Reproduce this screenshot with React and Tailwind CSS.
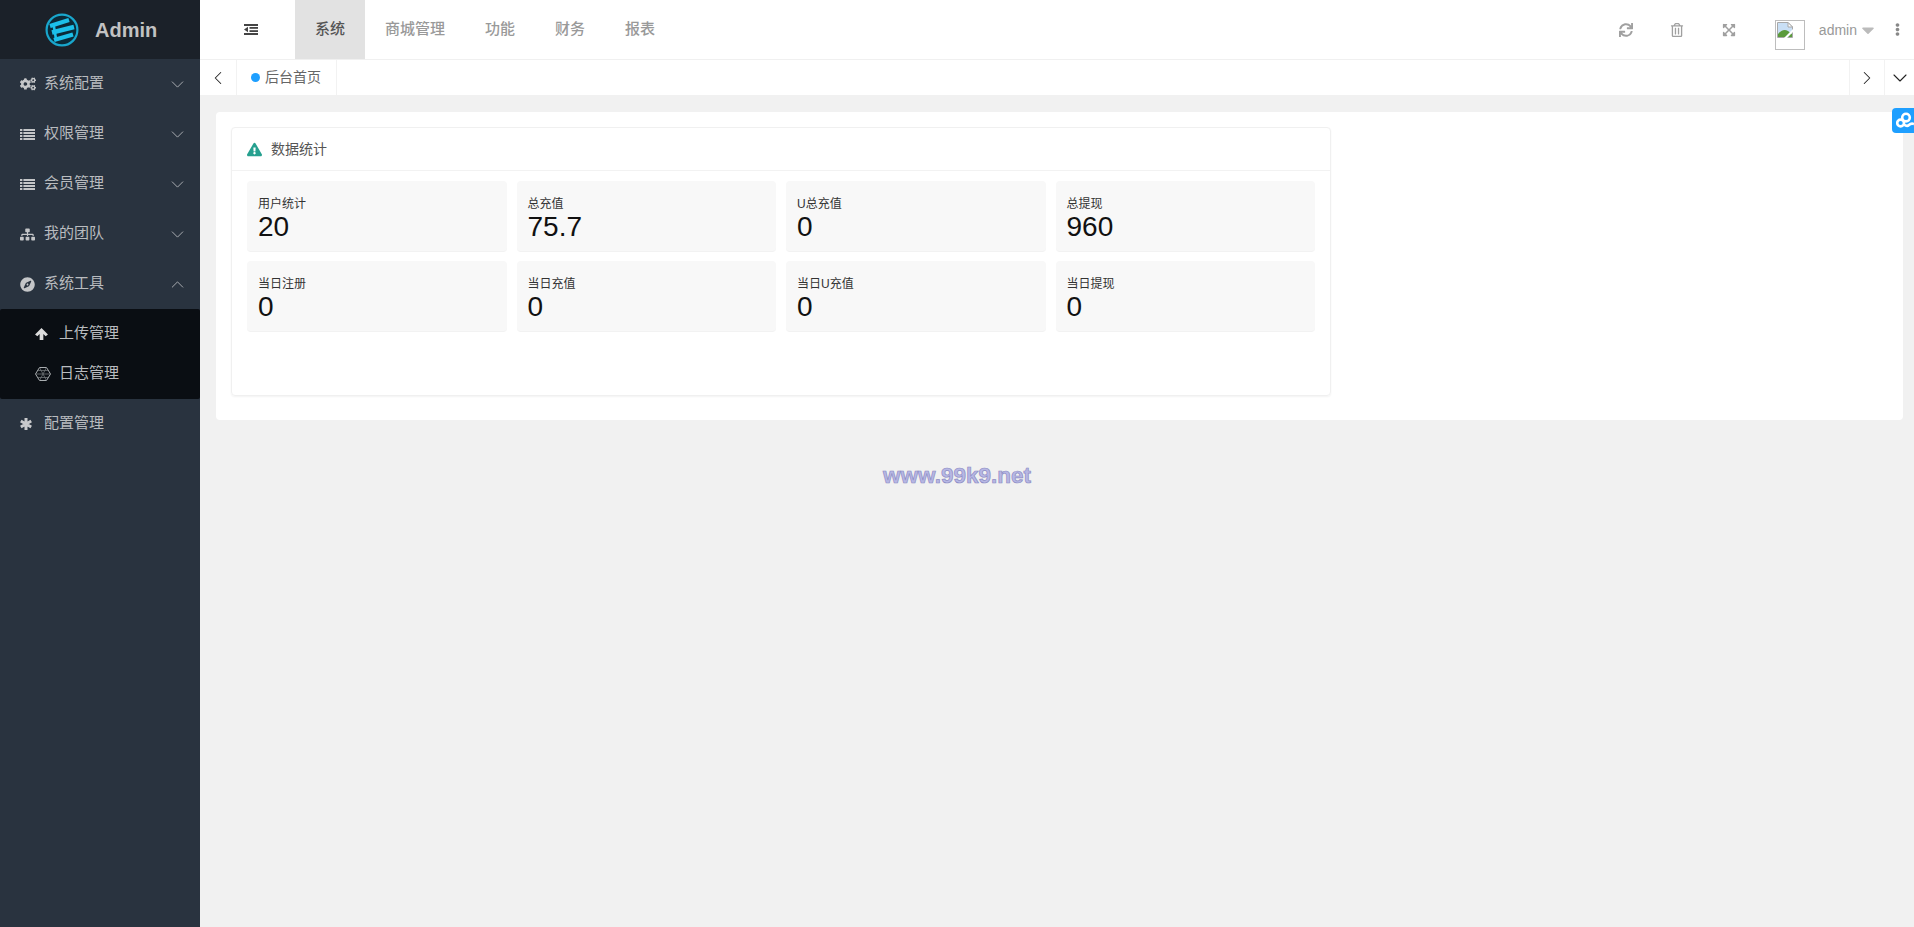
import React from "react";
import { ChevronDown, ChevronLeft, ChevronRight, ChevronUp } from "lucide-react";
import {
  FaCaretDown,
  FaCogs,
  FaCompass,
  FaEllipsisV,
  FaExclamationTriangle,
  FaExpandArrowsAlt,
  FaRegTrashAlt,
  FaSitemap,
  FaSync,
} from "react-icons/fa";

const Logo = () => (
  <svg width="34" height="34" viewBox="0 0 34 34">
    <circle cx="17" cy="17" r="15.4" fill="#0b2a38" stroke="#19a6cc" strokeWidth="2.2" />
    <g stroke="#1cc0ea" strokeWidth="4.4">
      <path d="M5 13 L24 7" />
      <path d="M7 19.5 L29 14" />
      <path d="M9 27 L28 21.5" />
      <path d="M8.5 11 L11 26" strokeWidth="2.6" />
    </g>
  </svg>
);

const HexIcon = () => (
  <svg width="16" height="16" viewBox="0 0 16 16" fill="none" stroke="#a9adb0" strokeWidth="0.8">
    <path d="M4.5 1.5 H11.5 L15.5 8 L11.5 14.5 H4.5 L0.5 8 Z" strokeWidth="1" />
    <path d="M4.5 1.5 L11.5 14.5 M11.5 1.5 L4.5 14.5 M0.5 8 H15.5 M3 4.5 H13 M3 11.5 H13" stroke="#6f7376" />
  </svg>
);

const BrokenImage = () => (
  <svg width="16" height="16" viewBox="0 0 16 16">
    <path d="M0.5 0.5 H11 L15.5 5 V15.5 H0.5 Z" fill="#c9dff5" stroke="#a8a8a8" strokeWidth="1" />
    <path d="M11 0.5 V5 H15.5 Z" fill="#fff" stroke="#a8a8a8" strokeWidth="1" />
    <path d="M1 15 V12 Q6 6 11 9 L15 12 V15 Z" fill="#5b9b3c" />
    <path d="M7 16 L16 7 V10 L10 16 Z" fill="#fff" />
  </svg>
);

const LinkIcon = () => (
  <svg width="18" height="18" viewBox="0 0 18 18" fill="none" stroke="#fff" strokeWidth="2.6">
    <circle cx="4.6" cy="11" r="3.4" />
    <circle cx="10" cy="5.6" r="3.8" />
    <path d="M8 12.5 Q11 15 13 13 Q15 11 18 12" />
  </svg>
);

const OutdentIcon = () => (
  <svg width="14" height="11" viewBox="0 0 14 11" fill="#444">
    <rect width="14" height="2" />
    <rect x="5.5" y="3" width="8.5" height="1.8" />
    <rect x="5.5" y="6.2" width="8.5" height="1.8" />
    <rect y="9" width="14" height="2" />
    <path d="M4 2.8 L0 5.5 L4 8.2 Z" />
  </svg>
);

const ListIcon = () => (
  <svg width="15" height="11" viewBox="0 0 15 11" fill="#c4c6c8">
    {[0, 3, 6, 9].map((y) => (
      <g key={y}>
        <rect y={y} width="2.4" height="2" />
        <rect x="3.4" y={y} width="11.6" height="2" />
      </g>
    ))}
  </svg>
);

const ArrowUpIcon = () => (
  <svg width="13" height="12" viewBox="0 0 14 13" fill="#dcdcdc">
    <path d="M7 0 L14 7 L11.5 9 L9 6.5 V13 H5 V6.5 L2.5 9 L0 7 Z" />
  </svg>
);

const AsteriskIcon = () => (
  <svg width="12" height="12" viewBox="0 0 12 12" stroke="#c9cacc" strokeWidth="3">
    <path d="M6 0 V12 M0.8 3 L11.2 9 M11.2 3 L0.8 9" />
  </svg>
);

const menus = [
  { name: "系统配置", icon: <FaCogs size={16} /> },
  { name: "权限管理", icon: <ListIcon /> },
  { name: "会员管理", icon: <ListIcon /> },
  { name: "我的团队", icon: <FaSitemap size={15} /> },
];

const stats = [
  ["用户统计", "20"],
  ["总充值", "75.7"],
  ["U总充值", "0"],
  ["总提现", "960"],
  ["当日注册", "0"],
  ["当日充值", "0"],
  ["当日U充值", "0"],
  ["当日提现", "0"],
];

const MenuRow = ({ icon, name, open, arrow = true }) => (
  <div className="flex h-[50px] items-center pl-5 pr-3 text-[15px] text-[#b9bcbf]">
    <span className="flex w-6 items-center text-[#c4c6c8]">{icon}</span>
    <span className="flex-1 pb-px">{name}</span>
    {arrow &&
      (open ? (
        <ChevronUp size={21} strokeWidth={1} />
      ) : (
        <ChevronDown size={21} strokeWidth={1} />
      ))}
  </div>
);

const Sidebar = () => (
  <aside className="flex w-[200px] shrink-0 flex-col bg-[#29333f]">
    <div className="flex h-[59px] items-center bg-[#1b2129] pl-[45px]">
      <Logo />
      <span className="ml-[16px] text-[20px] font-bold text-[#c2c2c2]">Admin</span>
    </div>
    {menus.map((m) => (
      <MenuRow key={m.name} icon={m.icon} name={m.name} />
    ))}
    <MenuRow icon={<FaCompass size={15} />} name="系统工具" open />
    <div className="rounded-[2px] bg-[#0a0e13] py-[5px] text-[15px] text-[#b9bcbf]">
      <div className="flex h-10 items-center pl-[35px]">
        <span className="flex w-6 items-center">
          <ArrowUpIcon />
        </span>
        <span className="pb-px">上传管理</span>
      </div>
      <div className="flex h-10 items-center pl-[35px]">
        <span className="flex w-6 items-center">
          <HexIcon />
        </span>
        <span className="pb-px">日志管理</span>
      </div>
    </div>
    <MenuRow icon={<AsteriskIcon />} name="配置管理" arrow={false} />
  </aside>
);

const TopBar = () => (
  <header className="flex h-[60px] shrink-0 items-start justify-between border-b border-[#f0f0f0] bg-white">
    <div className="flex h-[59px] items-center">
      <div className="flex w-[95px] items-center justify-center pl-[7px]">
        <OutdentIcon />
      </div>
      <div className="flex h-full items-center bg-[#e2e2e2] px-5 text-[15px] font-medium text-[#555]">系统</div>
      {["商城管理", "功能", "财务", "报表"].map((t) => (
        <div key={t} className="flex h-full items-center px-5 text-[15px] font-medium text-[#999]">
          {t}
        </div>
      ))}
    </div>
    <div className="flex h-[59px] items-center pr-[10px] text-[#a0a0a0]">
      <FaSync size={14} />
      <FaRegTrashAlt size={14} className="ml-[37px]" />
      <FaExpandArrowsAlt size={14} className="ml-[38px]" />
      <div className="ml-[39px] mt-[10px] h-[30px] w-[30px] border border-[#bdbdbd] p-px">
        <BrokenImage />
      </div>
      <span className="ml-[14px] text-sm text-[#999]">admin</span>
      <FaCaretDown size={20} className="ml-px text-[#bbb]" />
      <FaEllipsisV size={13} className="ml-[13px] text-[#888]" />
    </div>
  </header>
);

const TabBar = () => (
  <div className="flex h-[35px] shrink-0 items-stretch bg-white text-[#222]">
    <div className="flex w-[37px] items-center justify-center border-r border-[#f2f2f2]">
      <ChevronLeft size={22} strokeWidth={1.1} />
    </div>
    <div className="flex w-[100px] items-center border-r border-[#f2f2f2] pl-[14px] text-sm text-[#666]">
      <span className="mr-[5px] h-[9px] w-[9px] rounded-full bg-[#1e9fff]" />
      <span className="pb-[2px]">后台首页</span>
    </div>
    <div className="flex-1" />
    <div className="flex w-[35px] items-center justify-center border-l border-[#f2f2f2]">
      <ChevronRight size={22} strokeWidth={1.1} />
    </div>
    <div className="flex w-[30px] items-center justify-center border-l border-[#f2f2f2]">
      <ChevronDown size={24} strokeWidth={1.1} />
    </div>
  </div>
);

const StatBox = ({ label, value }) => (
  <div className="h-[71px] rounded-sm border-b border-[#f2f2f2] bg-[#f8f8f8] pl-[11px] pt-[15px]">
    <div className="h-4 text-xs leading-4 text-[#333]">{label}</div>
    <div className="text-[28px] leading-[30px] text-[#111]">{value}</div>
  </div>
);

export default function App() {
  return (
    <div className="relative flex h-screen w-full overflow-hidden bg-[#f1f1f1] [font-family:'Liberation_Sans','Noto_Sans_CJK_SC',sans-serif]">
      <Sidebar />
      <main className="flex min-w-0 flex-1 flex-col">
        <TopBar />
        <TabBar />
        <div className="ml-4 mr-[11px] mt-[17px] h-[308px] rounded bg-white pl-[15px] pt-[15px]">
          <div className="h-[269px] w-[1100px] rounded border border-[#f0f0f0] shadow-[0_1px_2px_rgba(0,0,0,0.05)]">
            <div className="flex h-[43px] items-center border-b border-[#f2f2f2] pl-[15px] text-sm text-[#555]">
              <FaExclamationTriangle size={15} className="mr-[9px] text-[#26a08f]" />
              <span className="pb-px">数据统计</span>
            </div>
            <div className="grid grid-cols-4 gap-x-[10px] gap-y-[9px] px-[15px] pt-[10px]">
              {stats.map(([label, value]) => (
                <StatBox key={label} label={label} value={value} />
              ))}
            </div>
          </div>
        </div>
        <div className="mt-[44px] pr-[200px] text-center text-[22.5px] font-bold leading-6 text-[#b7b7e4] [-webkit-text-stroke:0.7px_#8d8dc4]">
          www.99k9.net
        </div>
      </main>
      <div className="absolute right-0 top-[108px] flex h-[25px] w-[22px] items-center overflow-hidden rounded-l bg-[#1e9fff] pl-[4px]">
        <LinkIcon />
      </div>
    </div>
  );
}
